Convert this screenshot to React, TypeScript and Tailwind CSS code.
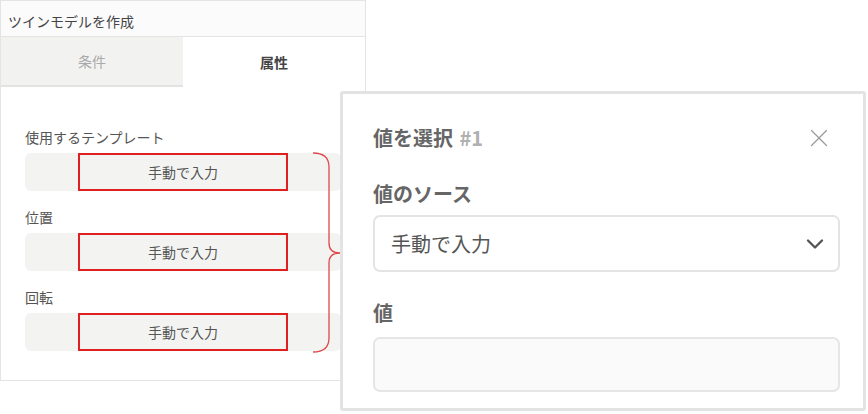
import { X, ChevronDown } from "lucide-react";

const FONT = "font-['Noto_Sans_CJK_JP','Noto_Sans',sans-serif]";

const FIELDS = ["使用するテンプレート", "位置", "回転"];

export default function App() {
  return (
    <div className={`relative w-[868px] h-[414px] bg-white ${FONT}`}>
      {/* left panel */}
      <div className="w-[366px] h-[381px] border border-[#e4e4e4] flex flex-col">
        <div className="h-[36px] border-b border-[#e4e4e4] bg-[#fbfbfb] flex items-center pl-[7px] pt-[5px] text-[14px] text-[#444]">
          ツインモデルを作成
        </div>
        <div className="flex h-[50px]">
          <div className="flex-1 bg-[#f2f3f1] border-b-2 border-[#e3e4e2] flex items-center justify-center text-[14px] text-[#aaa]">
            条件
          </div>
          <div className="flex-1 flex items-center justify-center text-[14px] font-bold text-[#444]">
            属性
          </div>
        </div>
        <div className="flex flex-col gap-[16px] pt-[40px] pl-[24px] pr-[24px]">
          {FIELDS.map((f) => (
            <div key={f} className="flex flex-col gap-[6px]">
              <span className="text-[14px] leading-[20px] text-[#555]">{f}</span>
              <div className="h-[38px] rounded-[6px] bg-[#f3f4f2] flex justify-center">
                <span className="w-[210px] h-[38px] border-2 border-[#e02020] flex items-center justify-center text-[14px] text-[#555]">
                  手動で入力
                </span>
              </div>
            </div>
          ))}
        </div>
      </div>

      {/* brace annotation */}
      <svg
        className="absolute left-[300px] top-[145px]"
        width="50"
        height="215"
        viewBox="0 0 50 215"
        fill="none"
      >
        <path
          d="M13 8 Q29 8 29 22 L29 98 Q29 108 40 108 Q29 108 29 118 L29 193 Q29 207 13 207"
          stroke="#e0464c"
          strokeWidth="1.3"
        />
      </svg>

      {/* value picker popup */}
      <div className="absolute left-[340px] top-[91px] w-[526px] h-[320px] bg-white border-[3px] border-[#e3e3e3] rounded-[3px] pt-[30px] pl-[30px] pr-[23px]">
        <div className="flex items-center justify-between h-[28px]">
          <span className="text-[20px] font-bold text-[#666]">
            値を選択 <span className="text-[#b0b0b0] ml-[2px]">#1</span>
          </span>
          <X className="w-[30px] h-[30px] mr-[6px] text-[#9a9a9a]" strokeWidth={1} />
        </div>
        <div className="mt-[28px] h-[28px] flex items-center text-[20px] font-bold text-[#666]">
          値のソース
        </div>
        <div className="mt-[7px] h-[57px] rounded-[7px] border-2 border-[#e4e4e4] flex items-center justify-between pl-[16px] pr-[9px]">
          <span className="text-[20px] text-[#555]">手動で入力</span>
          <ChevronDown className="w-[28px] h-[28px] text-[#555]" strokeWidth={2} />
        </div>
        <div className="mt-[27px] h-[28px] flex items-center text-[20px] font-bold text-[#666]">
          値
        </div>
        <div className="mt-[10px] h-[55px] rounded-[7px] border-2 border-[#e6e6e6] bg-[#fafafa]" />
      </div>
    </div>
  );
}
